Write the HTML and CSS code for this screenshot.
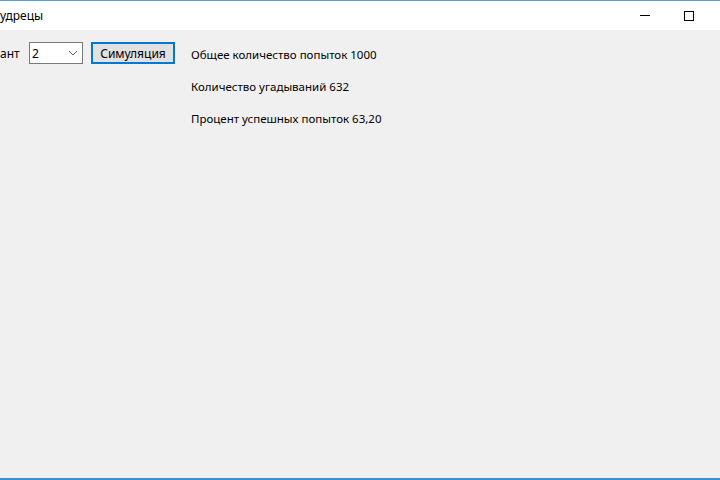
FILE: index.html
```html
<!DOCTYPE html>
<html lang="ru">
<head>
  <meta charset="UTF-8" />
  <title>Мудрецы</title>
  <link rel="stylesheet" href="styles.css">
</head>
<body>
  <div class="fenetre">

    <!-- BARRE DE TITRE -->
    <div class="titre">
      <span class="titre-texte">удрецы</span>
      <div class="boutons">
        <span class="btn-min"></span>
        <span class="btn-max"></span>
      </div>
    </div>

    <!-- CONTENU -->
    <div class="contenu">
      <div class="ligne-controles">
        <span class="etiquette">ант</span>
        <div class="combo">
          <span>2</span>
          <svg width="10" height="6" viewBox="0 0 10 6">
            <polyline points="1,1 5,5 9,1" fill="none" stroke="#606060" stroke-width="1" />
          </svg>
        </div>
        <button class="bouton">Симуляция</button>
      </div>
      <div class="resultats">
        <div class="res">Общее количество попыток 1000</div>
        <div class="res">Количество угадываний 632</div>
        <div class="res">Процент успешных попыток 63,20</div>
      </div>
    </div>

  </div>
</body>
</html>
```

FILE: styles.css
```css
html, body {
  margin: 0;
  padding: 0;
  overflow: hidden;
}

body {
  background: #f0f0f0;
  color: #000;
  font-family: "Segoe UI", "Noto Sans", "Liberation Sans", sans-serif;
  font-size: 11.5px;
}

.fenetre {
  width: 720px;
  height: 480px;
  box-sizing: border-box;
  border-top: 1px solid #5a9fd6;
  border-bottom: 2px solid #3f8fd0;
  display: flex;
  flex-direction: column;
}

.titre {
  background: #fff;
  height: 29px;
  display: flex;
  align-items: center;
  justify-content: space-between;
}

.titre-texte {
  font-size: 12px;
}

.boutons {
  display: flex;
  align-items: center;
  gap: 34px;
  margin-right: 26px;
}

.btn-min {
  width: 10px;
  height: 1px;
  background: #000;
}

.btn-max {
  width: 8px;
  height: 8px;
  border: 1px solid #000;
}

.contenu {
  flex: 1;
  display: flex;
  padding-top: 12px;
}

.ligne-controles {
  display: flex;
  align-items: center;
  height: 22px;
}

.etiquette {
  width: 29px;
  font-size: 12px;
}

.combo {
  height: 20px;
  width: 46px;
  border: 1px solid #7a7a7a;
  background: #fff;
  display: flex;
  align-items: center;
  justify-content: space-between;
  padding: 0 4px 0 2px;
  font-size: 12px;
}

.bouton {
  margin-left: 8px;
  width: 84px;
  height: 22px;
  background: #e1e1e1;
  border: 2px solid #0078d7;
  font-family: inherit;
  font-size: 12px;
  color: #000;
  padding: 0;
}

.resultats {
  margin-left: 16px;
  display: flex;
  flex-direction: column;
  gap: 15px;
  padding-top: 4px;
}

.res {
  line-height: 17px;
}
```
